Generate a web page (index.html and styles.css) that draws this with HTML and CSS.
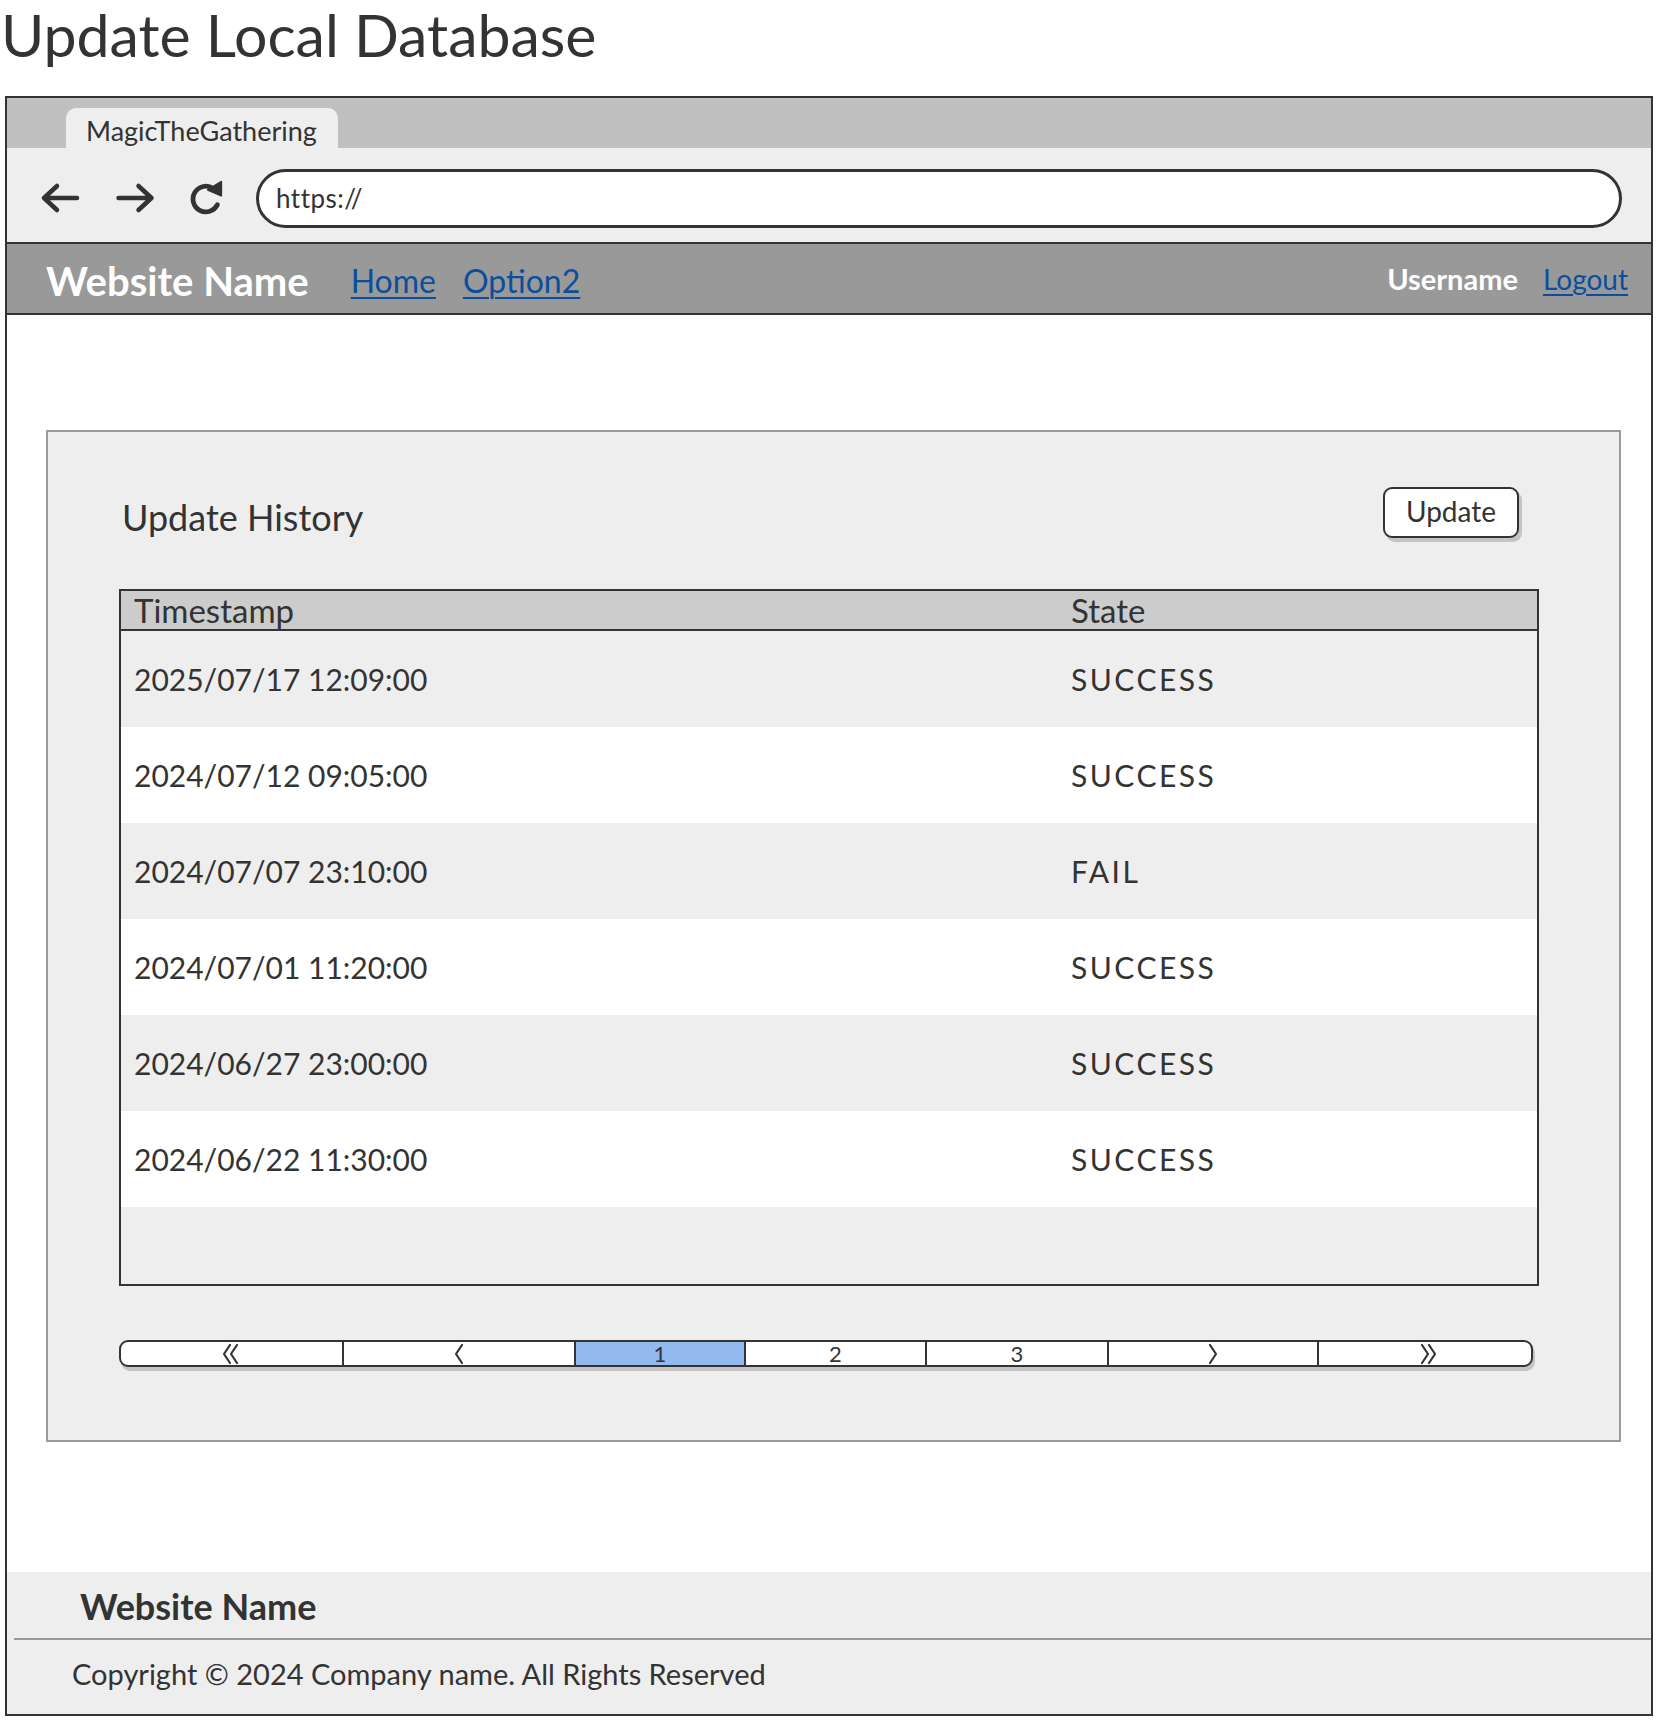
FILE: index.html
```html
<!DOCTYPE html>
<html lang="en">
<head>
<meta charset="utf-8">
<title>Update Local Database</title>
<link rel="stylesheet" href="styles.css">
</head>
<body>
<h1 class="page-title">Update Local Database</h1>
<div class="browser">
  <div class="tabbar">
    <div class="tab">MagicTheGathering</div>
  </div>
  <div class="toolbar">
    <svg class="icon icon-back" viewBox="0 0 40 32" width="40" height="32"><path d="M37 16H4M17 4L4 16L17 28" fill="none" stroke="#333" stroke-width="4.5" stroke-linecap="round" stroke-linejoin="round"/></svg>
    <svg class="icon icon-fwd" viewBox="0 0 40 32" width="41" height="32"><path d="M3 16H36M23 4L36 16L23 28" fill="none" stroke="#333" stroke-width="4.5" stroke-linecap="round" stroke-linejoin="round"/></svg>
    <svg class="icon icon-refresh" viewBox="0 0 40 40" width="38" height="38"><path d="M32 27A13.5 13.5 0 1 1 27.5 10" fill="none" stroke="#333" stroke-width="5" stroke-linecap="round"/><polygon points="22,11.5 36,3 36,17.5" fill="#333" stroke="#333" stroke-width="2" stroke-linejoin="round"/></svg>
    <div class="url">https://</div>
  </div>
  <nav class="navbar">
    <span class="brand">Website Name</span>
    <a class="nav-link nav-home" href="#">Home</a>
    <a class="nav-link" href="#">Option2</a>
    <span class="spacer"></span>
    <span class="user">Username</span>
    <a class="nav-link logout" href="#">Logout</a>
  </nav>
  <main class="content">
    <section class="panel">
      <div class="panel-head">
        <h2 class="panel-title">Update History</h2>
        <button class="btn">Update</button>
      </div>
      <div class="table">
        <div class="row thead"><div class="cell">Timestamp</div><div class="cell">State</div></div>
        <div class="row odd"><div class="cell">2025/07/17 12:09:00</div><div class="cell state">SUCCESS</div></div>
        <div class="row even"><div class="cell">2024/07/12 09:05:00</div><div class="cell state">SUCCESS</div></div>
        <div class="row odd"><div class="cell">2024/07/07 23:10:00</div><div class="cell state">FAIL</div></div>
        <div class="row even"><div class="cell">2024/07/01 11:20:00</div><div class="cell state">SUCCESS</div></div>
        <div class="row odd"><div class="cell">2024/06/27 23:00:00</div><div class="cell state">SUCCESS</div></div>
        <div class="row even"><div class="cell">2024/06/22 11:30:00</div><div class="cell state">SUCCESS</div></div>
        <div class="filler"></div>
      </div>
      <div class="pager">
        <div class="pg"><svg viewBox="0 0 20 22" width="20" height="22"><path d="M8 2L2 11L8 20M15 2L9 11L15 20" fill="none" stroke="#333" stroke-width="2.2" stroke-linecap="round" stroke-linejoin="round"/></svg></div>
        <div class="pg"><svg viewBox="0 0 12 22" width="12" height="22"><path d="M9 2L3 11L9 20" fill="none" stroke="#333" stroke-width="2.2" stroke-linecap="round" stroke-linejoin="round"/></svg></div>
        <div class="pg active">1</div>
        <div class="pg">2</div>
        <div class="pg">3</div>
        <div class="pg"><svg viewBox="0 0 12 22" width="12" height="22"><path d="M3 2L9 11L3 20" fill="none" stroke="#333" stroke-width="2.2" stroke-linecap="round" stroke-linejoin="round"/></svg></div>
        <div class="pg"><svg viewBox="0 0 20 22" width="20" height="22"><path d="M5 2L11 11L5 20M12 2L18 11L12 20" fill="none" stroke="#333" stroke-width="2.2" stroke-linecap="round" stroke-linejoin="round"/></svg></div>
      </div>
    </section>
  </main>
  <footer class="footer">
    <div class="footer-brand">Website Name</div>
    <div class="footer-copy">Copyright © 2024 Company name. All Rights Reserved</div>
  </footer>
</div>
</body>
</html>
```
FILE: styles.css
```css
* { box-sizing: border-box; }
html, body { margin: 0; padding: 0; background: #fff; }
body {
  width: 1658px;
  font-family: Lato, "Open Sans", sans-serif;
  color: #333;
}

.page-title {
  margin: 0;
  height: 70px;
  font-size: 59px;
  line-height: 70px;
  font-weight: 400;
  padding-left: 1px;
  color: #333;
}

.browser {
  margin: 26px 0 0 5px;
  width: 1648px;
  border: 2px solid #333;
  display: flex;
  flex-direction: column;
}

.tabbar {
  height: 50px;
  background: #c0c0c0;
  padding: 10px 0 0 59px;
}
.tab {
  width: 272px;
  height: 40px;
  background: #eeeeee;
  border-radius: 10px 10px 0 0;
  padding: 6px 0 0 20px;
  font-size: 27px;
  line-height: 34px;
  color: #333;
}

.toolbar {
  height: 96px;
  background: #eeeeee;
  border-bottom: 2px solid #333;
  display: flex;
  align-items: center;
  padding: 6px 0 0 33px;
}
.icon { display: block; flex: none; }
.icon-back { margin-right: 35px; }
.icon-fwd { margin-right: 31px; }
.icon-refresh { margin-right: 31px; }
.url {
  width: 1366px;
  height: 59px;
  background: #fff;
  border: 3px solid #333;
  border-radius: 30px;
  padding-left: 17px;
  font-size: 26px;
  letter-spacing: 0.5px;
  line-height: 53px;
  color: #333;
}

.navbar {
  height: 71px;
  background: #999999;
  border-bottom: 2px solid #333;
  display: flex;
  align-items: center;
  padding: 0 23px 0 39px;
}
.brand {
  color: #fff;
  font-weight: 700;
  font-size: 40px;
  margin-right: 42px;
  padding-top: 4px;
}
.nav-link {
  color: #0b4f9c;
  text-decoration: underline;
  text-underline-offset: 4px;
  text-decoration-thickness: 2px;
  font-size: 32px;
  padding-top: 4px;
}
.nav-home { margin-right: 27px; }
.spacer { flex: 1; }
.user {
  color: #fff;
  font-size: 29px;
  font-weight: 700;
  margin-right: 25px;
}
.logout { font-size: 28px; padding-top: 0; }

.content {
  height: 1257px;
  background: #fff;
  padding: 115px 0 0 39px;
}
.panel {
  width: 1575px;
  height: 1012px;
  background: #eeeeee;
  border: 2px solid #9a9a9a;
  padding: 55px 0 0 71px;
}
.panel-head {
  width: 1400px;
  height: 51px;
  display: flex;
  align-items: center;
  justify-content: space-between;
}
.panel-title {
  margin: 0;
  padding: 8px 0 0 3px;
  font-size: 36px;
  font-weight: 400;
  color: #333;
}
.btn {
  width: 136px;
  height: 51px;
  background: #fff;
  border: 2.5px solid #333;
  border-radius: 9px;
  box-shadow: 3px 4px 0 #c4c4c4;
  font-family: Lato, "Open Sans", sans-serif;
  font-size: 28px;
  color: #333;
  padding: 0 0 4px 0;
}

.table {
  margin-top: 51px;
  width: 1420px;
  height: 697px;
  border: 2px solid #333;
  display: flex;
  flex-direction: column;
}
.row {
  display: grid;
  grid-template-columns: 937px 1fr;
  height: 96px;
  align-items: center;
  font-size: 30px;
  color: #333;
}
.row .cell { padding-left: 13px; }
.row .state { letter-spacing: 2.5px; }
.thead {
  height: 40px;
  background: #cccccc;
  border-bottom: 2px solid #333;
  font-size: 33px;
  line-height: 36px;
}
.odd { background: #eeeeee; }
.even { background: #ffffff; }
.filler { flex: 1; background: #eeeeee; }

.pager {
  margin-top: 54px;
  width: 1414px;
  height: 27px;
  display: grid;
  grid-template-columns: 221px 232px 170px 181px 182px 210px 218px;
  border: 2px solid #333;
  border-radius: 9px;
  background: #fff;
  box-shadow: 2px 4px 0 #c4c4c4;
  overflow: hidden;
}
.pg {
  display: flex;
  align-items: center;
  justify-content: center;
  border-left: 2px solid #333;
  font-size: 22px;
  line-height: 23px;
  color: #333;
}
.pg:first-child { border-left: none; }
.pg svg { display: block; }
.pg.active { background: #93b9f0; }

.footer {
  height: 142px;
  background: #eeeeee;
  display: flex;
  flex-direction: column;
}
.footer-brand {
  height: 66px;
  padding: 10px 0 0 73px;
  font-size: 36px;
  font-weight: 700;
  line-height: 48px;
  color: #333;
}
.footer-copy {
  margin-left: 7px;
  border-top: 2px solid #9a9a9a;
  padding: 17px 0 0 58px;
  font-size: 29px;
  line-height: 34px;
  color: #333;
}
```
